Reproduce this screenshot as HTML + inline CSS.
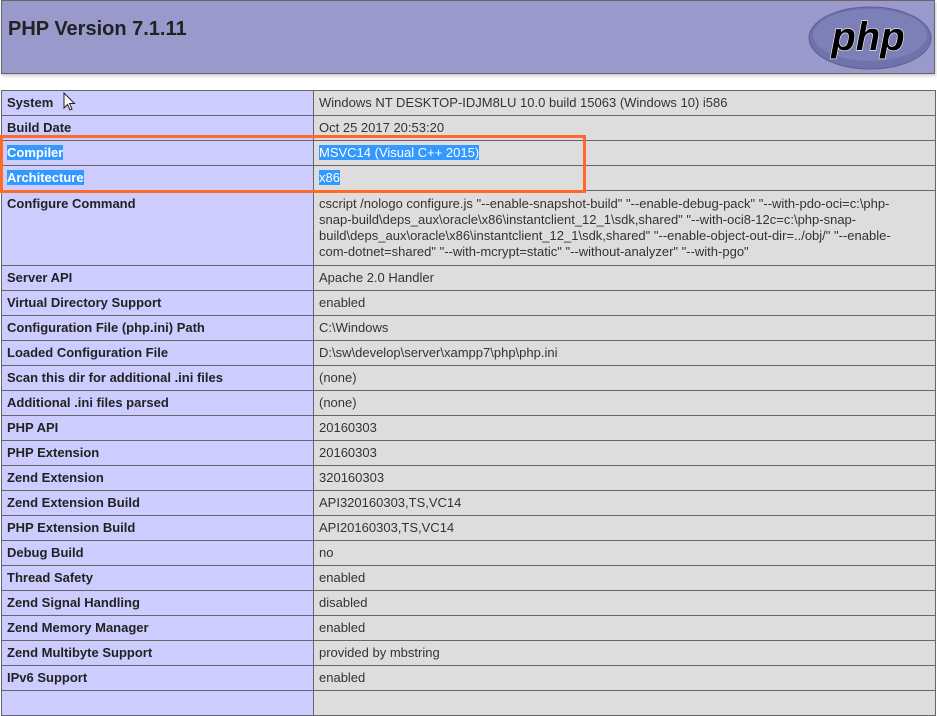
<!DOCTYPE html>
<html><head><meta charset="utf-8"><style>
body{margin:0;background:#fff;font-family:"Liberation Sans",sans-serif;font-size:13px;color:#222;width:937px;height:693px;overflow:hidden;position:relative}
.hdr{position:absolute;left:1px;top:0;width:932px;height:72px;background:#9999cc;border:1px solid #666;box-shadow:1px 2px 3px #ccc}
.hdr h1{margin:0;position:absolute;left:6px;top:17px;font-size:20px;font-weight:bold;color:#222}
table{position:absolute;left:1px;top:90px;border-collapse:collapse;width:935px;table-layout:fixed}
td{border:1px solid #666;height:25px;padding:0 5px;vertical-align:middle;line-height:16px;box-sizing:border-box}
td.e{background:#ccccff;font-weight:bold;width:312px;color:#222}
td.v{background:#ddd;color:#333}
.cc td{height:75px;vertical-align:top;padding-top:5px}
.sel{background:#3399ff;color:#fff}
.box{position:absolute;left:0;top:135px;width:580px;height:52px;border:3px solid #ff6a2a}
</style></head><body>
<div class="hdr"><h1>PHP Version 7.1.11</h1>
<svg style="position:absolute;left:806px;top:5px" width="124" height="64" viewBox="0 0 124 64">
<ellipse cx="62" cy="32" rx="61" ry="31" fill="#6f73aa" stroke="#5b5f96" stroke-width="1"/>
<ellipse cx="62" cy="29" rx="57" ry="26" fill="#8a8ec4" opacity=".5"/>
<text x="60" y="44" text-anchor="middle" font-family="Liberation Sans,sans-serif" font-size="40" font-weight="bold" font-style="italic" fill="#000" stroke="#fff" stroke-width="1.2" paint-order="stroke">php</text>
</svg></div>
<table>
<tr><td class="e">System</td><td class="v">Windows NT DESKTOP-IDJM8LU 10.0 build 15063 (Windows 10) i586</td></tr>
<tr><td class="e">Build Date</td><td class="v">Oct 25 2017 20:53:20</td></tr>
<tr><td class="e"><span class="sel">Compiler </span></td><td class="v"><span class="sel">MSVC14 (Visual C++ 2015)</span></td></tr>
<tr><td class="e"><span class="sel">Architecture </span></td><td class="v"><span class="sel">x86</span></td></tr>
<tr class="cc"><td class="e">Configure Command</td><td class="v">cscript /nologo configure.js "--enable-snapshot-build" "--enable-debug-pack" "--with-pdo-oci=c:\php-<br>snap-build\deps_aux\oracle\x86\instantclient_12_1\sdk,shared" "--with-oci8-12c=c:\php-snap-<br>build\deps_aux\oracle\x86\instantclient_12_1\sdk,shared" "--enable-object-out-dir=../obj/" "--enable-<br>com-dotnet=shared" "--with-mcrypt=static" "--without-analyzer" "--with-pgo"</td></tr>
<tr><td class="e">Server API</td><td class="v">Apache 2.0 Handler</td></tr>
<tr><td class="e">Virtual Directory Support</td><td class="v">enabled</td></tr>
<tr><td class="e">Configuration File (php.ini) Path</td><td class="v">C:\Windows</td></tr>
<tr><td class="e">Loaded Configuration File</td><td class="v">D:\sw\develop\server\xampp7\php\php.ini</td></tr>
<tr><td class="e">Scan this dir for additional .ini files</td><td class="v">(none)</td></tr>
<tr><td class="e">Additional .ini files parsed</td><td class="v">(none)</td></tr>
<tr><td class="e">PHP API</td><td class="v">20160303</td></tr>
<tr><td class="e">PHP Extension</td><td class="v">20160303</td></tr>
<tr><td class="e">Zend Extension</td><td class="v">320160303</td></tr>
<tr><td class="e">Zend Extension Build</td><td class="v">API320160303,TS,VC14</td></tr>
<tr><td class="e">PHP Extension Build</td><td class="v">API20160303,TS,VC14</td></tr>
<tr><td class="e">Debug Build</td><td class="v">no</td></tr>
<tr><td class="e">Thread Safety</td><td class="v">enabled</td></tr>
<tr><td class="e">Zend Signal Handling</td><td class="v">disabled</td></tr>
<tr><td class="e">Zend Memory Manager</td><td class="v">enabled</td></tr>
<tr><td class="e">Zend Multibyte Support</td><td class="v">provided by mbstring</td></tr>
<tr><td class="e">IPv6 Support</td><td class="v">enabled</td></tr>
<tr><td class="e">&nbsp;</td><td class="v">&nbsp;</td></tr>
</table>
<div class="box"></div>
<svg style="position:absolute;left:63px;top:92px" width="14" height="20" viewBox="0 0 14 20"><path d="M1 1 L1 16 L4.5 12.5 L7 18 L9 17 L6.5 11.5 L11.5 11.5 Z" fill="#fff" stroke="#222" stroke-width="1"/></svg>
</body></html>
